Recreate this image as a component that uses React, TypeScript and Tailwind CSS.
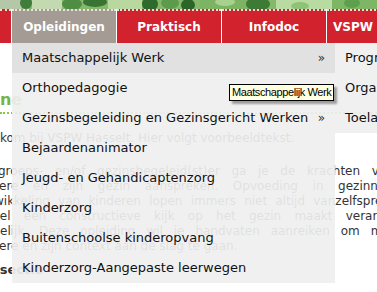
import React from "react";

const menu = [
  { label: "Maatschappelijk Werk", sub: true, active: true },
  { label: "Orthopedagogie" },
  { label: "Gezinsbegeleiding en Gezinsgericht Werken", sub: true },
  { label: "Bejaardenanimator" },
  { label: "Jeugd- en Gehandicaptenzorg" },
  { label: "Kinderzorg" },
  { label: "Buitenschoolse kinderopvang" },
  { label: "Kinderzorg-Aangepaste leerwegen" },
];

const submenu = ["Programma", "Organisatie", "Toelatingsvoorwaarden"];

function Banner() {
  return (
    <svg width="377" height="9" className="block" viewBox="0 0 377 9">
      <rect width="377" height="9" fill="#86b86c" />
      <rect x="0" width="22" height="9" fill="#b4c7a6" />
      <ellipse cx="26" cy="3" rx="6" ry="6" fill="#3f7d3a" />
      <rect x="32" width="30" height="9" fill="#c3d9b0" />
      <ellipse cx="72" cy="4" rx="10" ry="6" fill="#4f8c44" />
      <ellipse cx="95" cy="2" rx="12" ry="5" fill="#3a7434" />
      <rect x="108" width="34" height="9" fill="#b9d89f" />
      <ellipse cx="150" cy="4" rx="8" ry="7" fill="#2e6a2b" />
      <ellipse cx="170" cy="3" rx="9" ry="6" fill="#5b9b4b" />
      <ellipse cx="188" cy="5" rx="7" ry="6" fill="#2c6529" />
      <rect x="200" width="48" height="9" fill="#7cb463" />
      <ellipse cx="225" cy="2" rx="10" ry="4" fill="#a9d18e" />
      <ellipse cx="258" cy="4" rx="12" ry="7" fill="#3c7a36" />
      <rect x="276" width="56" height="9" fill="#b7dba0" />
      <ellipse cx="300" cy="6" rx="9" ry="4" fill="#8ec274" />
      <rect x="332" width="45" height="9" fill="#7db765" />
      <ellipse cx="352" cy="3" rx="8" ry="5" fill="#5e9f4d" />
    </svg>
  );
}

export default function App() {
  return (
    <div className="relative w-[377px] h-[292px] overflow-hidden bg-white font-['DejaVu_Sans',Verdana,sans-serif]">
      <Banner />
      {/* Tab bar */}
      <div className="flex h-[34px] bg-[#d2222d]">
        <div className="w-[11px] shrink-0 bg-[#d2222d] border-t-2 border-dotted border-[#eadfd6]" />
        <div className="w-[105px] shrink-0 flex border-l border-white">
          <div className="flex-1 flex flex-col bg-[#a39b94]">
            <div className="h-[2px] border-t-2 border-dotted border-[#e9e3dc]" />
            <div className="flex-1 flex items-center justify-center text-white text-[12px] font-bold">Opleidingen</div>
          </div>
        </div>
        <div className="w-[105px] shrink-0 flex border-l border-white">
          <div className="flex-1 flex flex-col bg-[#d2222d]">
            <div className="h-[2px] border-t-2 border-dotted border-[#eadfd6]" />
            <div className="flex-1 flex items-center justify-center text-white text-[12px] font-bold">Praktisch</div>
          </div>
        </div>
        <div className="w-[105px] shrink-0 flex border-l border-white">
          <div className="flex-1 flex flex-col bg-[#d2222d]">
            <div className="h-[2px] border-t-2 border-dotted border-[#eadfd6]" />
            <div className="flex-1 flex items-center justify-center text-white text-[12px] font-bold">Infodoc</div>
          </div>
        </div>
        <div className="w-[53px] shrink-0 flex border-l border-white">
          <div className="flex-1 flex flex-col bg-[#d2222d]">
            <div className="h-[2px] border-t-2 border-dotted border-[#eadfd6]" />
            <div className="flex-1 flex items-center justify-center text-white text-[12px] font-bold">VSPW</div>
          </div>
        </div>
        <div className="flex-1 border-l border-white bg-[#d2222d]" />
      </div>

      {/* Page content */}
      <div className="text-[12px] leading-[15px] text-[#333]">
        <div className="mt-[46px] h-[25px] border-b-2 border-dotted border-[#8dc63f]">
          <div className="-ml-[36px] whitespace-nowrap text-[16px] leading-[22px] font-bold text-[#78b443]">Online</div>
        </div>
        <p className="mt-[17px] -ml-[22px] whitespace-nowrap">Welkom bij VSPW Hasselt. Hier volgt voorbeeldtekst.</p>
        <div className="mt-[18px]">
          <div className="-ml-[2px] whitespace-nowrap [word-spacing:7.8px]">groeps- en/of gezinsbegeleid(st)er ga je de krachten van de</div>
          <div className="-ml-[1px] whitespace-nowrap [word-spacing:10.8px]">ere en zijn gezin aanspreken. Opvoeding in gezinnen</div>
          <div className="-ml-[6px] whitespace-nowrap [word-spacing:4.4px]">wikkeling van kinderen lopen immers niet altijd vanzelfsprekend.</div>
          <div className="-ml-[10px] whitespace-nowrap [word-spacing:9.4px]">wel een constructieve kijk op het gezin maakt verandering</div>
          <div className="ml-0 whitespace-nowrap [word-spacing:7.1px]">elijk. Deze opleiding wil je handvaten aanreiken om met</div>
          <div className="-ml-[1px] whitespace-nowrap">ere en zijn context aan de slag te gaan.</div>
        </div>
        <div className="mt-[8px] -ml-[29px] whitespace-nowrap text-[13px] font-bold text-[#333]">Infosectie</div>
      </div>

      {/* Dropdown menu */}
      <div className="absolute left-[12px] top-[43px] w-[323px] flex flex-col">
        {menu.map((m) => (
          <div
            key={m.label}
            className={
              "h-[30px] flex items-center justify-between pl-[10px] pr-[10px] text-[13px] text-[#111] " +
              (m.active ? "bg-[rgba(223,223,223,0.93)]" : "bg-[rgba(239,239,239,0.92)]")
            }
          >
            <span className="whitespace-nowrap">{m.label}</span>
            {m.sub ? <span className="text-[12px] text-[#333]">»</span> : null}
          </div>
        ))}
      </div>

      {/* Submenu */}
      <div className="absolute left-[335px] top-[43px] w-[170px] flex flex-col">
        {submenu.map((s) => (
          <div key={s} className="h-[30px] flex items-center pl-[10px] text-[13px] text-[#111] bg-[rgba(239,239,239,0.92)] whitespace-nowrap">
            {s}
          </div>
        ))}
      </div>

      {/* Tooltip */}
      <div className="absolute left-[229px] top-[84px] h-[17px] px-[2px] flex items-center border border-black bg-[#ffffe1] text-black text-[11px] tracking-[-0.4px] font-['Liberation_Sans',Arial,sans-serif] whitespace-nowrap shadow-[3px_3px_2px_rgba(0,0,0,0.35)]">
        Maatschappelijk Werk
      </div>
    </div>
  );
}
